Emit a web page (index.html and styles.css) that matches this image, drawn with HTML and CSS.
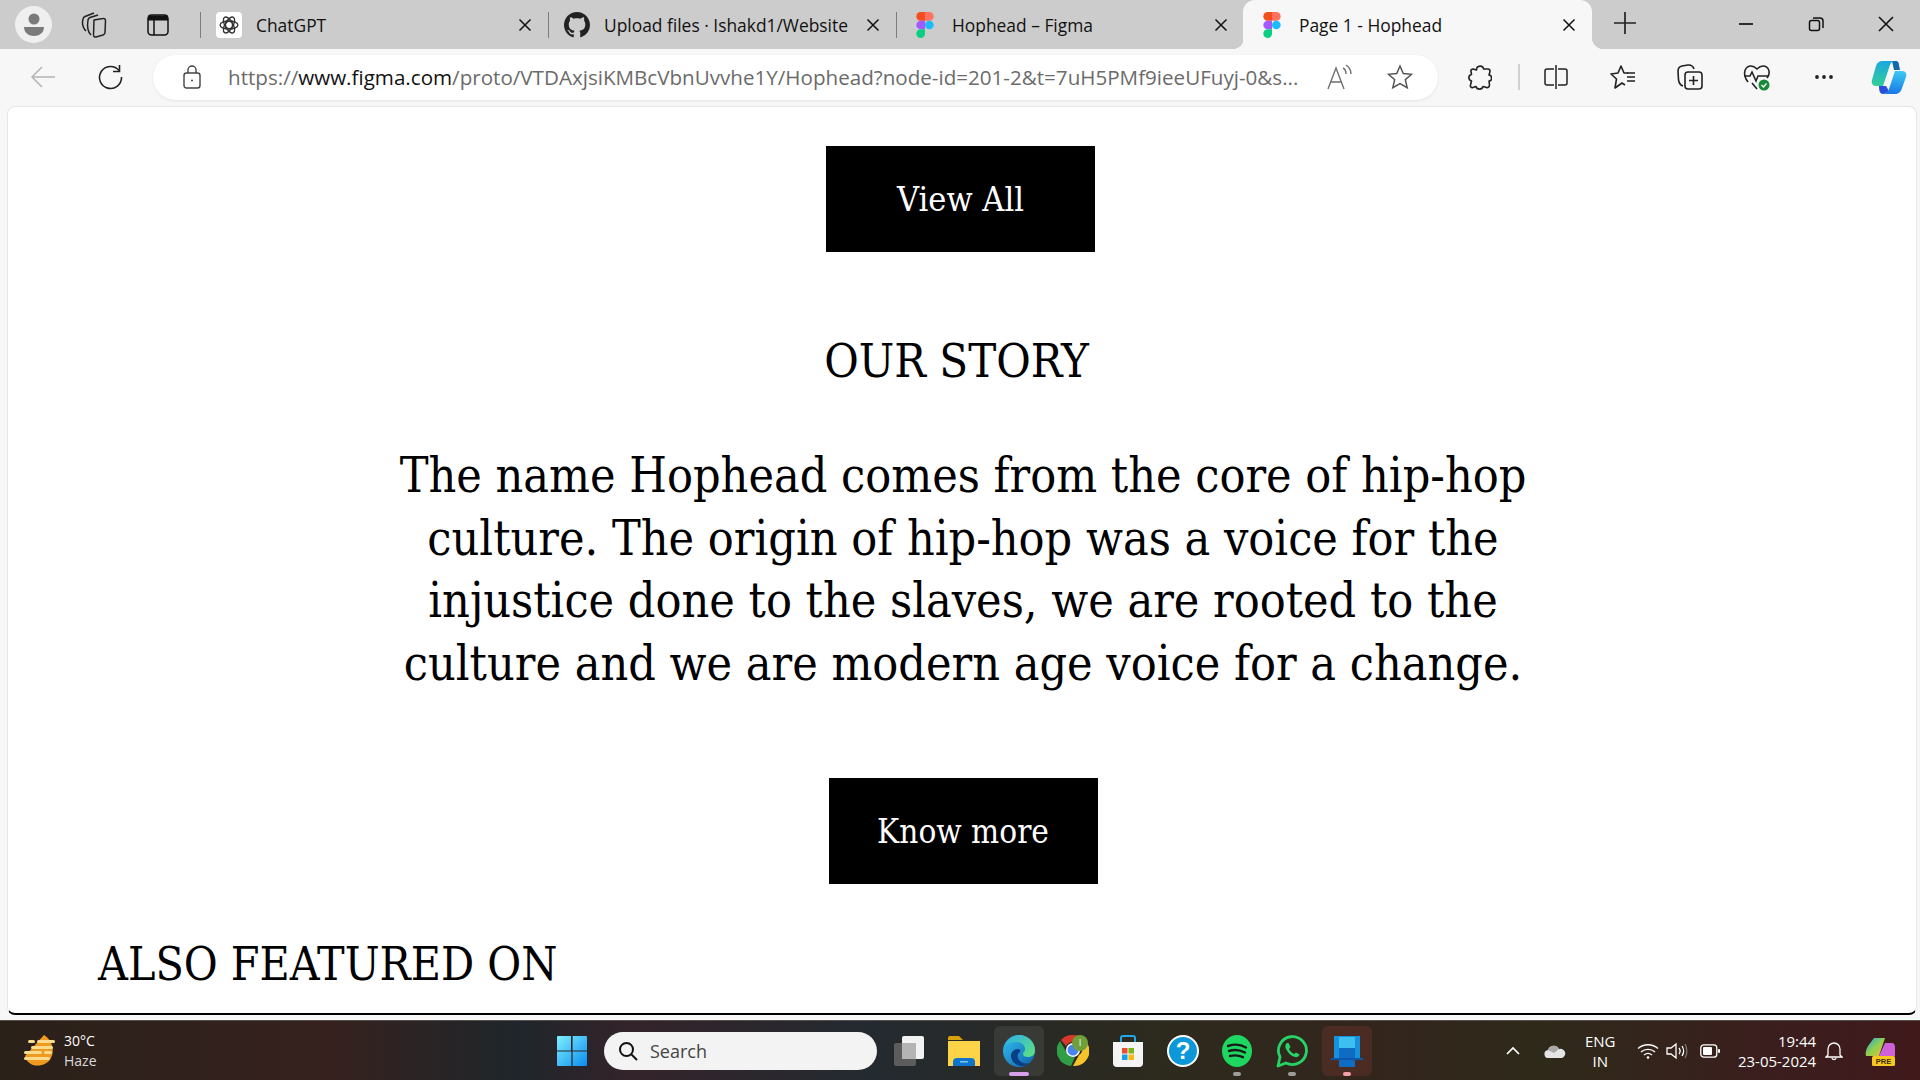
FILE: index.html
```html
<!DOCTYPE html>
<html lang="en">
  <head>
    <meta charset="UTF-8" />
    <title>Page 1 - Hophead</title>
    <link rel="stylesheet" href="styles.css">
  </head>
  <body>
    <div class="tabstrip">
      <div class="strip-left">
        <span class="avatar">
          <svg width="24" height="26" viewBox="0 0 24 26"><circle cx="12" cy="7" r="5.500" fill="#7a7a7a"/><path d="M2 15h20c0 6-5 9-10 9s-10-3-10-9z" fill="#7a7a7a"/></svg>
        </span>
        <span class="strip-btn first">
          <svg width="26" height="28" viewBox="0 0 26 28" fill="none" stroke="#222" stroke-width="1.500" stroke-linejoin="round"><path d="M13 9l9-1.500c1.500-.3 2.500.5 2.500 2l-.5 12c0 1.500-1 2-2 2.500l-7 2c-1.500.3-2.500-.5-2.500-2z"/><path d="M10 24C7 21 6 15 7 9c.3-1.500 1-2 2-2.500L17 4"/><path d="M5 20C2 17 1 12 2 8c.3-1.500 1-2 2-2.500L13 2"/></svg>
        </span>
        <span class="strip-btn">
          <svg width="22" height="22" viewBox="0 0 22 22" fill="none" stroke="#111" stroke-width="1.500"><rect x="1" y="1" width="20" height="20" rx="3.500"/><path d="M1 4h20" stroke-width="5"/><path d="M7 6v15"/></svg>
        </span>
      </div>

      <div class="tab">
        <span class="favicon chatgpt">
          <svg width="20" height="20" viewBox="0 0 18 18" fill="none" stroke="#333" stroke-width="1.200"><circle cx="9" cy="9" r="3.200"/><ellipse cx="9" cy="9" rx="8" ry="3.600"/><ellipse cx="9" cy="9" rx="8" ry="3.600" transform="rotate(60 9 9)"/><ellipse cx="9" cy="9" rx="8" ry="3.600" transform="rotate(120 9 9)"/></svg>
        </span>
        <span class="tab-title">ChatGPT</span>
        <svg class="tab-x" width="14" height="14" viewBox="0 0 14 14" stroke="#111" stroke-width="1.500"><path d="M1.500 1.500l11 11M12.500 1.500l-11 11"/></svg>
      </div>
      <div class="tab">
        <svg class="favicon github" width="26" height="26" viewBox="0 0 16 16" fill="#222"><path d="M8 0C3.580 0 0 3.580 0 8c0 3.540 2.290 6.530 5.470 7.590.4.070.55-.17.55-.38 0-.19-.01-.82-.01-1.490-2.010.37-2.530-.49-2.690-.94-.09-.23-.48-.94-.82-1.130-.28-.15-.68-.52-.01-.53.63-.01 1.080.58 1.230.82.720 1.210 1.870.87 2.330.66.070-.52.280-.87.510-1.070-1.780-.2-3.640-.89-3.640-3.950 0-.87.310-1.590.820-2.150-.08-.2-.36-1.020.08-2.120 0 0 .67-.21 2.200.82.640-.18 1.320-.27 2-.27s1.360.09 2 .27c1.530-1.040 2.200-.82 2.200-.82.440 1.100.16 1.920.08 2.120.51.560.82 1.270.82 2.150 0 3.070-1.870 3.750-3.650 3.950.29.250.54.730.54 1.480 0 1.070-.01 1.930-.01 2.200 0 .21.150.46.550.38A8.010 8.010 0 0 0 16 8c0-4.420-3.580-8-8-8z"/></svg>
        <span class="tab-title">Upload files · Ishakd1/Website</span>
        <svg class="tab-x" width="14" height="14" viewBox="0 0 14 14" stroke="#111" stroke-width="1.500"><path d="M1.500 1.500l11 11M12.500 1.500l-11 11"/></svg>
      </div>
      <div class="tab before-active">
        <svg class="favicon figma" width="18" height="26" viewBox="0 0 16 24"><path d="M0 4a4 4 0 0 1 4-4h4v8H4a4 4 0 0 1-4-4z" fill="#f24e1e"/><path d="M8 0h4a4 4 0 0 1 0 8H8z" fill="#ff7262"/><path d="M0 12a4 4 0 0 1 4-4h4v8H4a4 4 0 0 1-4-4z" fill="#a259ff"/><circle cx="12" cy="12" r="4" fill="#1abcfe"/><path d="M0 20a4 4 0 0 1 4-4h4v4a4 4 0 0 1-8 0z" fill="#0acf83"/></svg>
        <span class="tab-title">Hophead – Figma</span>
        <svg class="tab-x" width="14" height="14" viewBox="0 0 14 14" stroke="#111" stroke-width="1.500"><path d="M1.500 1.500l11 11M12.500 1.500l-11 11"/></svg>
      </div>
      <div class="tab active">
        <svg class="favicon figma" width="18" height="26" viewBox="0 0 16 24"><path d="M0 4a4 4 0 0 1 4-4h4v8H4a4 4 0 0 1-4-4z" fill="#f24e1e"/><path d="M8 0h4a4 4 0 0 1 0 8H8z" fill="#ff7262"/><path d="M0 12a4 4 0 0 1 4-4h4v8H4a4 4 0 0 1-4-4z" fill="#a259ff"/><circle cx="12" cy="12" r="4" fill="#1abcfe"/><path d="M0 20a4 4 0 0 1 4-4h4v4a4 4 0 0 1-8 0z" fill="#0acf83"/></svg>
        <span class="tab-title">Page 1 - Hophead</span>
        <svg class="tab-x" width="14" height="14" viewBox="0 0 14 14" stroke="#111" stroke-width="1.500"><path d="M1.500 1.500l11 11M12.500 1.500l-11 11"/></svg>
      </div>

      <span class="new-tab">
        <svg width="22" height="22" viewBox="0 0 22 22" stroke="#222" stroke-width="1.700"><path d="M11 0v22M0 11h22"/></svg>
      </span>
      <div class="window-btns">
        <svg width="16" height="16" viewBox="0 0 16 16" stroke="#111" stroke-width="1.700"><path d="M1 8h14"/></svg>
        <svg width="16" height="16" viewBox="0 0 16 16" fill="none" stroke="#111" stroke-width="1.500"><rect x="1.500" y="4.500" width="10" height="10" rx="2"/><path d="M5 2h7a3 3 0 0 1 3 3v7"/></svg>
        <svg width="16" height="16" viewBox="0 0 16 16" stroke="#111" stroke-width="1.600"><path d="M1 1l14 14M15 1L1 15"/></svg>
      </div>
    </div>

    <div class="toolbar">
      <span class="nav-btn">
        <svg width="26" height="24" viewBox="0 0 26 24" fill="none" stroke="#b4b4b4" stroke-width="1.500"><path d="M25 12H2M12 2L2 12l10 10"/></svg>
      </span>
      <span class="nav-btn">
        <svg width="26" height="26" viewBox="0 0 26 26" fill="none" stroke="#222" stroke-width="1.600"><path d="M22 6.500A11 11 0 1 0 24.500 13"/><path d="M22.500 1v6.500H16"/></svg>
      </span>

      <div class="address">
        <svg class="lock" width="18" height="24" viewBox="0 0 18 24" fill="none" stroke="#444" stroke-width="1.400"><rect x="1" y="8" width="16" height="15" rx="2.500"/><path d="M5 8V5a4 4 0 0 1 8 0v3"/><circle cx="9" cy="15.500" r="1" fill="#444" stroke="none"/></svg>
        <span class="url">https://<b>www.figma.com</b>/proto/VTDAxjsiKMBcVbnUvvhe1Y/Hophead?node-id=201-2&amp;t=7uH5PMf9ieeUFuyj-0&amp;s...</span>
        <svg class="read" width="26" height="26" viewBox="0 0 26 26" fill="none" stroke="#707070" stroke-width="1.400"><path d="M1 25L9 4l8 21M4 18h10"/><path d="M16 4c2 1 3 3 3 6M19 1c3 2 5 5 5 9"/></svg>
        <svg class="star" width="26" height="26" viewBox="0 0 26 26" fill="none" stroke="#555" stroke-width="1.500"><path d="M13 2l3.300 7.500 8.200.8-6.200 5.400 1.900 8L13 19.500 5.800 23.700l1.900-8L1.500 10.300l8.200-.8z"/></svg>
      </div>

      <span class="ext-btn">
        <svg width="24" height="26" viewBox="0 0 24 26" fill="none" stroke="#222" stroke-width="1.600" stroke-linejoin="round"><path d="M8.500 6C8.500 1 15.500 1 15.500 5L20 5C21.500 5 22 6 22 7.500L21 11C24.500 11.500 24.500 17 21 17L21.500 21C21.500 23 20 24 18.500 23.500L15 22.500C14 26 9 26 8 22.500L5 23.500C3 24 2 22.500 2.500 21L3.500 17C0 16 0 11 3.500 10.500L3 7.500C2.500 6 4 5 5 5Z"/></svg>
      </span>
      <span class="tool-sep"></span>
      <span class="tool-btn first">
        <svg width="24" height="24" viewBox="0 0 24 24" fill="none" stroke="#222" stroke-width="1.500"><path d="M10 4H3a2 2 0 0 0-2 2v12a2 2 0 0 0 2 2h7M14 4h7a2 2 0 0 1 2 2v12a2 2 0 0 1-2 2h-7M12 0v24"/></svg>
      </span>
      <span class="tool-btn">
        <svg width="26" height="26" viewBox="0 0 26 26" fill="none" stroke="#222" stroke-width="1.600" stroke-linejoin="round"><path d="M18 9h-4L11 2 8 9l-7 1 5.500 5L5 24l7-5 3 2"/><path d="M17 9h8M17 13h8M17 17h8"/></svg>
      </span>
      <span class="tool-btn">
        <svg width="26" height="26" viewBox="0 0 26 26" fill="none" stroke="#222" stroke-width="1.600"><rect x="8" y="8" width="17" height="17" rx="3"/><path d="M16.500 12v9M12 16.500h9M6 22C3 21 2 19 1.500 16L1 7c0-3 2-4.500 4-5l6-1c3-.3 5 1 6 4"/></svg>
      </span>
      <span class="tool-btn">
        <svg width="28" height="28" viewBox="0 0 28 28" fill="none" stroke="#222" stroke-width="1.600"><path d="M5 19l-2-3C0 10 2 3 8 3c3 0 5 2 6 3 1-1 3-3 6-3 6 0 8 7 4 12"/><path d="M1 13h6l2-4 4 9 2-5h10M9 20l5 6"/><circle cx="21" cy="22" r="5.500" fill="#188a3a" stroke="none"/><path d="M18.500 22l2 2 3-3.500" stroke="#fff" stroke-width="1.300"/></svg>
      </span>
      <span class="tool-btn">
        <svg width="20" height="6" viewBox="0 0 20 6" fill="#222"><circle cx="3" cy="3" r="1.900"/><circle cx="10" cy="3" r="1.900"/><circle cx="17" cy="3" r="1.900"/></svg>
      </span>
      <span class="copilot-btn">
        <svg width="36" height="36" viewBox="0 0 36 36">
          <defs>
            <linearGradient id="cpa" x1="0.300" y1="0" x2="0.200" y2="1"><stop offset="0" stop-color="#1aa8e0"/><stop offset="1" stop-color="#35cf98"/></linearGradient>
            <linearGradient id="cpb" x1="0.500" y1="0" x2="0.400" y2="1"><stop offset="0" stop-color="#3cc8f2"/><stop offset="1" stop-color="#1877e6"/></linearGradient>
          </defs>
          <path d="M21 2h4c2 0 3 2 3 4l1 5h-6z" fill="#0e6aa8"/>
          <path d="M12 2C8 2 6 4 5 7L1 21c-1 4 1 6 5 6h6l7-21c1-3 3-4 5-4z" fill="url(#cpa)"/>
          <path d="M8 27h7l3 5c-2 2-4 3-6 3-3 0-4-3-4-8z" fill="#2a4fdc"/>
          <path d="M24 12h7c4 0 5 3 4 6l-4 11c-1 4-4 6-7 6H12c3 0 5-2 6-5z" fill="url(#cpb)"/>
        </svg>
      </span>
    </div>

    <main class="viewport">
      <a class="btn view-all">View All</a>
      <h2 class="story-title">OUR STORY</h2>
      <p class="story-text">The name Hophead comes from the core of hip-hop culture. The origin of hip-hop was a voice for the injustice done to the slaves, we are rooted to the culture and we are modern age voice for a change.</p>
      <a class="btn know-more">Know more</a>
      <h2 class="featured-title">ALSO FEATURED ON</h2>
    </main>

    <footer class="taskbar">
      <div class="weather">
        <svg width="34" height="34" viewBox="0 0 34 34">
          <path d="M21 1c8 5 11 15 7 23-3 6-11 9-18 7C5 29 3 26 2 22z" fill="#ef9a1f"/>
          <g fill="#fbdc8e"><rect x="5" y="6" width="7" height="3" rx="1.500"/><rect x="14" y="6" width="18" height="3" rx="1.500"/><rect x="8" y="12" width="22" height="3" rx="1.500"/><rect x="1" y="17" width="18" height="3" rx="1.500"/><rect x="21" y="17" width="8" height="3" rx="1.500"/><rect x="1" y="23" width="26" height="3" rx="1.500"/></g>
        </svg>
        <div class="weather-text"><span>30°C</span><span class="haze">Haze</span></div>
      </div>

      <div class="task-center">
        <svg class="win-logo" width="30" height="30" viewBox="0 0 30 30">
          <defs><linearGradient id="win" x1="0" y1="0" x2="1" y2="1"><stop offset="0" stop-color="#7ff0ff"/><stop offset="1" stop-color="#0a8cf0"/></linearGradient></defs>
          <path d="M0 1a1 1 0 0 1 1-1h13v14.400H0zM15.600 0H29a1 1 0 0 1 1 1v13.400H15.600zM0 15.600h14.400V30H1a1 1 0 0 1-1-1zM15.600 15.600H30V29a1 1 0 0 1-1 1H15.600z" fill="url(#win)"/>
        </svg>
        <div class="search">
          <svg width="20" height="20" viewBox="0 0 20 20" fill="none" stroke="#111" stroke-width="2"><circle cx="8.500" cy="8.500" r="6.500"/><path d="M13.500 13.500L19 19"/></svg>
          <span>Search</span>
        </div>
        <div class="apps">
          <span class="app">
            <svg width="32" height="32" viewBox="0 0 32 32"><rect x="1" y="8" width="22" height="23" rx="2" fill="#5c5c5c"/><rect x="9" y="1" width="22" height="23" rx="2" fill="#f2f2f2"/><rect x="9" y="8" width="14" height="16" fill="#b4b4b4"/></svg>
          </span>
          <span class="app">
            <svg width="32" height="30" viewBox="0 0 32 30"><path d="M0 2a2 2 0 0 1 2-2h9l4 4H0z" fill="#d9a20c"/><path d="M0 5h32v25H0z" fill="#fdd448"/><path d="M5 26a4 4 0 0 1 4-4h14a4 4 0 0 1 4 4v4H5z" fill="#0f74cc"/><rect x="12" y="25" width="8" height="1.500" fill="#7fc4f5"/></svg>
          </span>
          <span class="app open">
            <svg width="32" height="32" viewBox="0 0 32 32">
              <defs>
                <linearGradient id="edg" x1="0" y1="0" x2="1" y2="1"><stop offset="0" stop-color="#35c1f1"/><stop offset="1" stop-color="#0a5fa8"/></linearGradient>
                <linearGradient id="edh" x1="0" y1="0" x2="1" y2="1"><stop offset="0" stop-color="#2fb0e8"/><stop offset="1" stop-color="#5fe37c"/></linearGradient>
              </defs>
              <circle cx="16" cy="16" r="16" fill="url(#edg)"/>
              <path d="M3 10C6 3 12 0 16 0c9 0 16 7 16 15 0 5-3 7-7 7-3 0-5-1-5-3 0-2 2-2 2-5 0-4-4-7-8-7-5 0-9 1-11 3z" fill="url(#edh)"/>
              <path d="M15 14c-4 0-7 3-7 7 0 5 5 10 11 10 3 0 5-1 7-3-3 1-8 0-10-3-2-3-2-6 1-8 1-1 0-3-2-3z" fill="#0b3f85"/>
            </svg>
            <i class="open-bar wide"></i>
          </span>
          <span class="app">
            <svg width="32" height="34" viewBox="0 0 32 34">
              <path d="M16 1a15 15 0 0 1 13 7H16a8 8 0 0 0-7 4L4 6a15 15 0 0 1 12-5z" fill="#d8382c"/>
              <path d="M3 7l7 12a7 7 0 0 0 8 4l-4 9A15.500 15.500 0 0 1 3 7z" fill="#2f9e47"/>
              <path d="M30 9a15 15 0 0 1-14 23l6-11a7 7 0 0 0 0-12z" fill="#f6c32d"/>
              <circle cx="16" cy="16" r="7" fill="#fff"/><circle cx="16" cy="16" r="5.500" fill="#4a84f0"/>
              <circle cx="23" cy="9" r="8" fill="#6fa03a"/><rect x="22.500" y="5" width="1.200" height="7" fill="#d8e6c8"/>
            </svg>
          </span>
          <span class="app">
            <svg width="30" height="32" viewBox="0 0 30 32"><path d="M8 7V3a2 2 0 0 1 2-2h10a2 2 0 0 1 2 2v4" fill="none" stroke="#22a8e8" stroke-width="2"/><path d="M0 7h30v21a4 4 0 0 1-4 4H4a4 4 0 0 1-4-4z" fill="#f4f4f4"/><rect x="9" y="13" width="5.500" height="5.500" fill="#e8502b"/><rect x="15.500" y="13" width="5.500" height="5.500" fill="#7ab51d"/><rect x="9" y="19.500" width="5.500" height="5.500" fill="#18a0e8"/><rect x="15.500" y="19.500" width="5.500" height="5.500" fill="#f6b912"/></svg>
          </span>
          <span class="app">
            <svg width="32" height="32" viewBox="0 0 32 32"><circle cx="16" cy="16" r="15" fill="#0c97d8" stroke="#fff" stroke-width="2"/><text x="16" y="24" text-anchor="middle" class="help-mark">?</text></svg>
          </span>
          <span class="app">
            <svg width="30" height="32" viewBox="0 0 30 32"><ellipse cx="15" cy="16" rx="15" ry="16" fill="#1ed760"/><path d="M6 11c6-2 13-1.500 18 1.500M7 16c5-1.500 11-1 16 1.500M8 21c4-1 9-.7 13 1.200" fill="none" stroke="#191919" stroke-width="2.400" stroke-linecap="round"/></svg>
            <i class="open-bar"></i>
          </span>
          <span class="app">
            <svg width="32" height="34" viewBox="0 0 32 34" fill="none"><path d="M2 32l2-9A14 14 0 1 1 10 29z" stroke="#25d366" stroke-width="2.800" stroke-linejoin="round"/><path d="M11 9c-2 1-2 4-1 6 2 4 5 7 9 8 2 .5 4-.5 4.500-2.500l-3.500-2-2 1.500c-2-1-4-3-5-5l1.500-2-2-4z" fill="#25d366"/></svg>
            <i class="open-bar"></i>
          </span>
          <span class="app running">
            <svg width="32" height="32" viewBox="0 0 32 32"><rect x="3" y="1" width="26" height="23" fill="#1591e0"/><rect x="8" y="2" width="16" height="12" fill="#3cc0f0"/><rect x="8" y="13" width="16" height="19" fill="#0f6cc2"/><rect x="0" y="23" width="32" height="2" fill="#0a58a8"/></svg>
            <i class="open-bar pink"></i>
          </span>
        </div>
      </div>

      <div class="tray">
        <svg class="t-chevron" width="14" height="9" viewBox="0 0 14 9" fill="none" stroke="#fff" stroke-width="1.700"><path d="M1 8l6-6 6 6"/></svg>
        <svg class="t-cloud" width="22" height="14" viewBox="0 0 22 14"><path d="M5 14a4 4 0 0 1-1-8 6 6 0 0 1 11-1 4.500 4.500 0 0 1 3 9z" fill="#e4e4e4"/><path d="M4 6a6 6 0 0 1 11-1l-5 4z" fill="#a8a8a8"/></svg>
        <div class="lang"><span>ENG</span><span>IN</span></div>
        <svg class="t-wifi" width="22" height="16" viewBox="0 0 22 16" fill="none" stroke="#fff" stroke-width="1.400"><path d="M1 5.500C6.500.5 15.500.5 21 5.500M4 9c4-3.500 10-3.500 14 0M7 12c2.500-2 5.500-2 8 0"/><circle cx="11" cy="14.500" r="1.300" fill="#fff" stroke="none"/></svg>
        <svg class="t-sound" width="22" height="18" viewBox="0 0 22 18" fill="none" stroke="#fff" stroke-width="1.300"><path d="M1 6h4l5-4v14l-5-4H1zM13 6c1.500 2 1.500 4 0 6M16 4c2 3 2 7 0 10"/><path d="M19 2c2.500 4 2.500 10 0 14" stroke="#777"/></svg>
        <svg class="t-batt" width="20" height="14" viewBox="0 0 20 14"><rect x=".8" y=".8" width="16" height="12.400" rx="3" fill="none" stroke="#fff" stroke-width="1.300"/><rect x="3" y="3" width="9" height="8" rx="1" fill="#fff"/><rect x="18" y="5" width="2" height="4" rx="1" fill="#fff"/></svg>
        <div class="clock"><span>19:44</span><span>23-05-2024</span></div>
        <svg class="t-bell" width="18" height="20" viewBox="0 0 18 20" fill="none" stroke="#fff" stroke-width="1.300"><path d="M3 14V8a6 6 0 0 1 12 0v6l2 2H1zM7 17c0 2 4 2 4 0"/></svg>
        <svg class="t-copilot" width="30" height="30" viewBox="0 0 30 30">
          <defs><linearGradient id="tc" x1="0" y1="0" x2="1" y2="1"><stop offset="0" stop-color="#1fa4e8"/><stop offset=".5" stop-color="#8fd04f"/><stop offset="1" stop-color="#f0c030"/></linearGradient></defs>
          <path d="M9 2h11l-6 18H1c-1-3 0-6 2-10z" fill="url(#tc)"/>
          <path d="M20 7h7c2 0 3 2 3 4v9H14z" fill="#d060d8"/>
          <rect x="7" y="20" width="23" height="10" rx="1.500" fill="#f8c820"/>
          <text x="18.500" y="28" text-anchor="middle" class="pre-mark">PRE</text>
        </svg>
      </div>
    </footer>
  </body>
</html>
```

FILE: styles.css
```css
* {
  box-sizing: border-box;
}

html, body {
  height: 100%;
}

body {
  margin: 0;
  height: 1080px;
  overflow: hidden;
  display: flex;
  flex-direction: column;
  background-color: #f7f7f7;
  font-family: "Open Sans", "Noto Sans", sans-serif;
  color: #111;
}

/* tab strip */
.tabstrip {
  display: flex;
  align-items: stretch;
  height: 49px;
  flex: none;
  background-color: #cccccc;
}

.strip-left {
  display: flex;
  align-items: center;
  width: 200px;
  padding-left: 15px;
}

.avatar {
  width: 37px;
  height: 37px;
  border-radius: 50%;
  background-color: #efefef;
  display: flex;
  align-items: center;
  justify-content: center;
}

.strip-btn {
  display: flex;
  width: 26px;
  justify-content: center;
  margin-left: 38px;
}

.strip-btn.first {
  margin-left: 29px;
}

.tab {
  position: relative;
  display: flex;
  align-items: center;
  width: 348px;
  padding: 0 16px;
  font-size: 17.400px;
}

.tab::before {
  content: "";
  position: absolute;
  left: 0;
  top: 12px;
  height: 26px;
  width: 1px;
  background-color: #7d7d7d;
}

.favicon {
  flex: none;
  margin-right: 16px;
}

.chatgpt {
  width: 26px;
  height: 26px;
  border-radius: 4px;
  background-color: #fff;
  display: flex;
  align-items: center;
  justify-content: center;
  margin-right: 14px;
}

.github {
  margin-right: 14px;
}

.figma {
  margin-left: 4px;
  margin-right: 18px;
}

.tab-title {
  flex: 1;
  white-space: nowrap;
  overflow: hidden;
}

.tab-x {
  flex: none;
}

.tab.active {
  background-color: #f7f7f7;
  border-radius: 12px 12px 0 0;
  width: 349px;
  margin-left: -1px;
  padding-left: 20px;
}

.tab.active::before {
  display: none;
}

.tab.active .figma {
  margin-left: 0;
  margin-right: 18px;
}

/* concave corners at the foot of the active tab */
.tab.active::after {
  content: "";
  position: absolute;
  right: -12px;
  bottom: 0;
  width: 12px;
  height: 12px;
  background: radial-gradient(circle at 100% 0, #cccccc 12px, #f7f7f7 12.500px);
}

.before-active::after {
  content: "";
  position: absolute;
  right: 0;
  bottom: 0;
  width: 12px;
  height: 12px;
  background: radial-gradient(circle at 0 0, #cccccc 12px, #f7f7f7 12.500px);
}

.new-tab {
  display: flex;
  align-items: center;
  margin-left: 22px;
  padding-bottom: 3px;
}

.window-btns {
  display: flex;
  align-items: center;
  margin-left: auto;
  gap: 54px;
  padding-right: 26px;
  padding-bottom: 2px;
}

/* address bar row */
.toolbar {
  display: flex;
  align-items: center;
  height: 57px;
  flex: none;
  padding-left: 16px;
  padding-bottom: 1px;
}

.nav-btn {
  width: 54px;
  display: flex;
  justify-content: center;
}

.nav-btn + .nav-btn {
  margin-left: 13px;
}

.address {
  display: flex;
  align-items: center;
  width: 1285px;
  height: 45px;
  margin-left: 16px;
  padding-left: 30px;
  background-color: #fff;
  border-radius: 23px;
  box-shadow: 0 1px 3px rgba(0, 0, 0, 0.08);
}

.lock {
  flex: none;
}

.url {
  margin-left: 27px;
  width: 1075px;
  flex: none;
  font-size: 20.600px;
  color: #6b6b6b;
  white-space: nowrap;
  overflow: hidden;
}

.url b {
  font-weight: 400;
  color: #111;
}

.read {
  margin-left: 24px;
  flex: none;
}

.star {
  margin-left: 34px;
  flex: none;
}

.ext-btn {
  display: flex;
  justify-content: center;
  width: 40px;
  margin-left: 22px;
}

.tool-sep {
  width: 2px;
  height: 26px;
  margin-left: 18px;
  background-color: #d0d0d0;
}

.tool-btn {
  display: flex;
  justify-content: center;
  align-items: center;
  width: 67px;
}

.tool-btn.first {
  margin-left: 2px;
}

.copilot-btn {
  display: flex;
  margin-left: 14px;
}

/* page in the viewport */
.viewport {
  flex: 1;
  min-height: 0;
  margin: 0 3px 5px 7px;
  overflow: hidden;
  background-color: #fff;
  border: 1px solid #e6e6e6;
  border-bottom: 2px solid #000;
  border-radius: 8px;
  display: flex;
  flex-direction: column;
  align-items: center;
  font-family: "DejaVu Serif Condensed", "DejaVu Serif", serif;
  color: #000;
}

.btn {
  display: flex;
  align-items: center;
  justify-content: center;
  width: 269px;
  height: 106px;
  flex: none;
  background-color: #000;
  color: #fff;
  font-size: 33px;
}

.view-all {
  margin-top: 39px;
  margin-right: 3px;
  font-size: 34px;
}

.story-title {
  margin: 77px 11px 0 0;
  font-size: 46.800px;
  font-weight: 400;
  line-height: 64px;
}

.story-text {
  margin: 51px 0 0 2px;
  width: 1170px;
  font-size: 48px;
  line-height: 62.500px;
  text-align: center;
}

.know-more {
  margin-top: 84px;
  margin-left: 2px;
}

.featured-title {
  align-self: flex-start;
  margin: 48px 0 0 90px;
  font-size: 46px;
  font-weight: 400;
  line-height: 64px;
  white-space: nowrap;
}

/* taskbar */
.taskbar {
  display: flex;
  align-items: center;
  height: 60px;
  flex: none;
  color: #fff;
  background: linear-gradient(90deg, #2a2119 0%, #36211e 17%, #1f262b 27%, #34232a 33%, #232a30 45%, #2d2a1e 60%, #33251c 72%, #2e2a1a 80%, #3a1e1d 92%, #40191b 100%);
  border-top: 1px solid #55504c;
}

.weather {
  display: flex;
  align-items: center;
  width: 557px;
  padding-left: 23px;
  flex: none;
}

.weather-text {
  display: flex;
  flex-direction: column;
  margin-left: 7px;
  font-size: 14px;
  line-height: 20px;
}

.haze {
  color: #d8d8d8;
}

.task-center {
  display: flex;
  align-items: center;
  flex: none;
}

.search {
  display: flex;
  align-items: center;
  width: 273px;
  height: 38px;
  margin-left: 17px;
  padding-left: 14px;
  border-radius: 19px;
  background-color: #f3f3f3;
  color: #444;
  font-size: 18px;
}

.search span {
  margin-left: 12px;
}

.apps {
  display: flex;
  margin-left: 5px;
}

.app {
  position: relative;
  display: flex;
  align-items: center;
  justify-content: center;
  width: 54.700px;
  height: 50px;
}

.app.open {
  background-color: rgba(255, 255, 255, 0.08);
  border-radius: 6px;
  width: 50px;
  margin: 0 2.350px;
}

.app.running {
  background-color: rgba(255, 90, 90, 0.12);
  border-radius: 6px;
  width: 50px;
  margin: 0 2.350px;
}

.open-bar {
  position: absolute;
  left: 50%;
  bottom: 0;
  width: 8px;
  height: 4px;
  margin-left: -4px;
  border-radius: 2px;
  background-color: #9c9c9c;
}

.open-bar.wide {
  width: 20px;
  margin-left: -10px;
  background-color: #d8a0e8;
}

.open-bar.pink {
  background-color: #f4a0a8;
}

.help-mark {
  font: 700 24px "Liberation Sans", sans-serif;
  fill: #fff;
}

.pre-mark {
  font: 700 7.500px "Liberation Sans", sans-serif;
  fill: #3a2a00;
}

.tray {
  display: flex;
  align-items: center;
  flex: 1;
  font-size: 15px;
}

.t-chevron {
  margin-left: 132px;
}

.t-cloud {
  margin-left: 24px;
}

.lang {
  display: flex;
  flex-direction: column;
  align-items: center;
  width: 40px;
  margin-left: 14px;
  line-height: 20px;
}

.t-wifi {
  margin-left: 17px;
}

.t-sound {
  margin-left: 7px;
}

.t-batt {
  margin-left: 12px;
}

.clock {
  display: flex;
  flex-direction: column;
  align-items: flex-end;
  width: 96px;
  line-height: 20px;
}

.t-bell {
  margin-left: 9px;
}

.t-copilot {
  margin-left: 22px;
}
```
